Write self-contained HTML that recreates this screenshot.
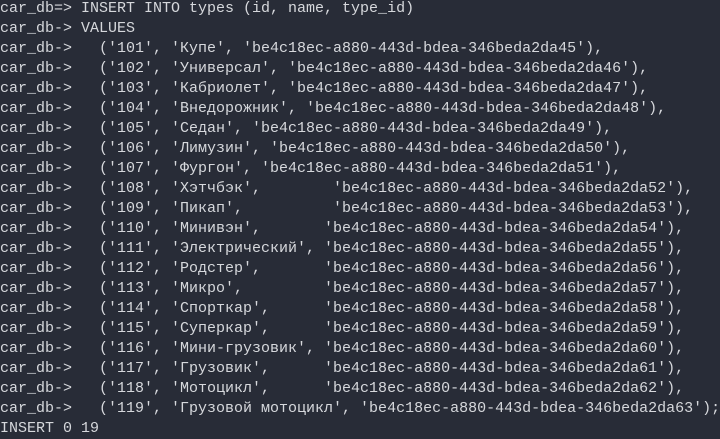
<!DOCTYPE html><html><head><meta charset="utf-8"><style>
html,body{margin:0;padding:0;background:#282c37;width:720px;height:438px;overflow:hidden}
pre{margin:0;position:absolute;top:-1px;left:0;font-family:"Liberation Mono",monospace;font-size:15px;line-height:20px;color:#d6d8dc;white-space:pre}
</style></head><body><pre>car_db=&gt; INSERT INTO types (id, name, type_id)
car_db-&gt; VALUES
car_db-&gt;   ('101', 'Купе', 'be4c18ec-a880-443d-bdea-346beda2da45'),
car_db-&gt;   ('102', 'Универсал', 'be4c18ec-a880-443d-bdea-346beda2da46'),
car_db-&gt;   ('103', 'Кабриолет', 'be4c18ec-a880-443d-bdea-346beda2da47'),
car_db-&gt;   ('104', 'Внедорожник', 'be4c18ec-a880-443d-bdea-346beda2da48'),
car_db-&gt;   ('105', 'Седан', 'be4c18ec-a880-443d-bdea-346beda2da49'),
car_db-&gt;   ('106', 'Лимузин', 'be4c18ec-a880-443d-bdea-346beda2da50'),
car_db-&gt;   ('107', 'Фургон', 'be4c18ec-a880-443d-bdea-346beda2da51'),
car_db-&gt;   ('108', 'Хэтчбэк',        'be4c18ec-a880-443d-bdea-346beda2da52'),
car_db-&gt;   ('109', 'Пикап',          'be4c18ec-a880-443d-bdea-346beda2da53'),
car_db-&gt;   ('110', 'Минивэн',       'be4c18ec-a880-443d-bdea-346beda2da54'),
car_db-&gt;   ('111', 'Электрический', 'be4c18ec-a880-443d-bdea-346beda2da55'),
car_db-&gt;   ('112', 'Родстер',       'be4c18ec-a880-443d-bdea-346beda2da56'),
car_db-&gt;   ('113', 'Микро',         'be4c18ec-a880-443d-bdea-346beda2da57'),
car_db-&gt;   ('114', 'Спорткар',      'be4c18ec-a880-443d-bdea-346beda2da58'),
car_db-&gt;   ('115', 'Суперкар',      'be4c18ec-a880-443d-bdea-346beda2da59'),
car_db-&gt;   ('116', 'Мини-грузовик', 'be4c18ec-a880-443d-bdea-346beda2da60'),
car_db-&gt;   ('117', 'Грузовик',      'be4c18ec-a880-443d-bdea-346beda2da61'),
car_db-&gt;   ('118', 'Мотоцикл',      'be4c18ec-a880-443d-bdea-346beda2da62'),
car_db-&gt;   ('119', 'Грузовой мотоцикл', 'be4c18ec-a880-443d-bdea-346beda2da63');
INSERT 0 19</pre></body></html>
